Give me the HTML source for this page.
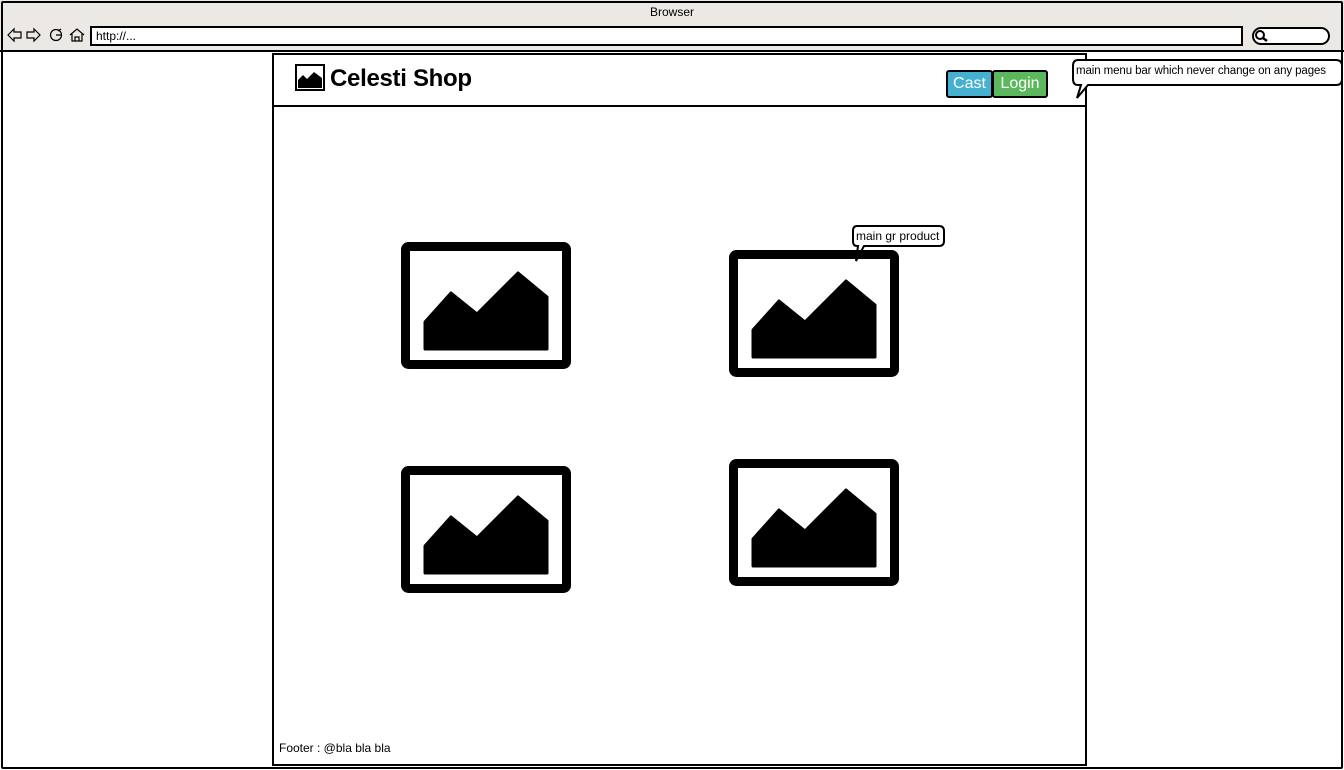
<!DOCTYPE html>
<html><head><meta charset="utf-8"><style>
*{margin:0;padding:0;box-sizing:border-box}
body{width:1344px;height:770px;background:#fff;position:relative;overflow:hidden;font-family:"Liberation Sans",sans-serif;color:#000}
.a{position:absolute}
</style></head><body>
<div class="a" style="left:0;top:0;width:1344px;height:52px;background:#ece9e4"></div>
<div class="a" style="left:0;top:5px;width:1344px;text-align:center;font-size:12px">Browser</div>
<div class="a" style="left:1px;top:1px;width:1342px;height:768px;border:2px solid #000;border-radius:2px"></div>
<div class="a" style="left:0;top:50px;width:1344px;height:2px;background:#000"></div>
<svg class="a" style="left:6px;top:26px" width="80" height="18" viewBox="0 0 80 18" fill="none" stroke="#000" stroke-width="1.2">
<path d="M2 9 L8 3 V6 H15 V12 H8 V15 Z"/>
<path d="M34 9 L28 3 V6 H21 V12 H28 V15 Z"/>
<circle cx="50" cy="9" r="5.5"/><path d="M50 9 H55 M52 5 L55 3"/>
<path d="M64 9 L71 3 L78 9 M66 8 V15 H76 V8 M69 15 V11 H73 V15"/>
</svg>
<div class="a" style="left:90px;top:26px;width:1153px;height:20px;background:#fff;border:2px solid #000;font-size:12px;padding:1px 4px">http://...</div>
<div class="a" style="left:1252px;top:27px;width:78px;height:18px;background:#fff;border:2px solid #000;border-radius:9px"></div>
<svg class="a" style="left:1254px;top:29px" width="16" height="14"><circle cx="6" cy="6" r="4" fill="none" stroke="#000" stroke-width="2"/><path d="M9 9 L13 12" stroke="#000" stroke-width="2.5"/></svg>

<div class="a" style="left:272px;top:53px;width:815px;height:713px;border:2px solid #000"></div>
<div class="a" style="left:272px;top:105px;width:815px;height:2px;background:#000"></div>
<svg class="a" style="left:295px;top:64px" width="30" height="27" viewBox="0 0 30 27"><rect x="1" y="1" width="28" height="25" fill="none" stroke="#000" stroke-width="2"/><path d="M3 24 V16 L8 11 L12 15 L19 8 L27 14 V24 Z" fill="#000"/></svg>
<div class="a" style="left:330px;top:65px;font-size:24px;font-weight:bold;letter-spacing:-0.3px">Celesti Shop</div>
<div class="a" style="left:946px;top:70px;width:47px;height:28px;background:#46b0d0;border:2px solid #000;border-radius:3px;color:#fff;font-size:16px;text-align:center;line-height:24px">Cast</div>
<div class="a" style="left:992px;top:70px;width:56px;height:28px;background:#5cb85c;border:2px solid #000;border-radius:3px;color:#fff;font-size:16px;text-align:center;line-height:24px">Login</div>

<svg class="a" style="left:1070px;top:58px" width="274" height="42"><path d="M8 2 H266 Q272 2 272 8 V21 Q272 27 266 27 H18 L7 40 L11 27 H8 Q3 27 3 21 V8 Q3 2 8 2 Z" fill="#fff" stroke="#000" stroke-width="2"/></svg>
<div class="a" style="left:1076px;top:65px;font-size:11.5px;letter-spacing:-0.1px">main menu bar which never change on any pages</div>

<svg class="a" style="left:851px;top:224px" width="96" height="40"><path d="M6 2 H88 Q93 2 93 7 V17 Q93 22 88 22 H13 L5 37 L7 22 H6 Q2 22 2 17 V7 Q2 2 6 2 Z" fill="#fff" stroke="#000" stroke-width="2"/></svg>
<div class="a" style="left:856px;top:229px;font-size:12px">main gr product</div>

<svg class="a" style="left:0;top:0" width="1344" height="770">
<defs><g id="im"><rect x="4.5" y="4.5" width="161" height="118" rx="3" fill="none" stroke="#000" stroke-width="9"/><path d="M24 107 V80 L50 51 L76 72 L117 31 L146 55 V107 Z" fill="#000" stroke="#000" stroke-width="3" stroke-linejoin="round"/></g></defs>
<use href="#im" x="401" y="242"/>
<use href="#im" x="729" y="250"/>
<use href="#im" x="401" y="466"/>
<use href="#im" x="729" y="459"/>
</svg>
<div class="a" style="left:279px;top:741px;font-size:12px">Footer : @bla bla bla</div>
</body></html>
